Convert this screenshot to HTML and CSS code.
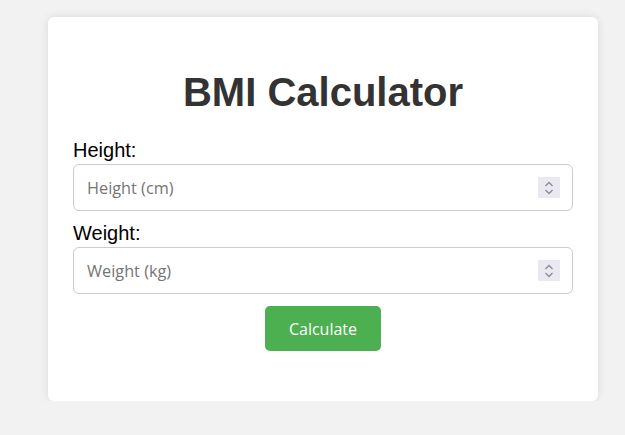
FILE: index.html
```html
<!DOCTYPE html>
<html>
<head>
<meta charset="utf-8">
<title>BMI Calculator</title>
<link rel="stylesheet" href="styles.css">
</head>
<body>
<div class="card">
  <h1 class="title">BMI Calculator</h1>
  <label class="label" for="height">Height:</label>
  <div class="field">
    <input class="input" id="height" type="number" placeholder="Height (cm)">
    <span class="spin"><svg width="12" height="16" viewBox="0 0 12 16"><path d="M2.5 6 L6 2.5 L9.5 6 M2.5 10 L6 13.5 L9.5 10" fill="none" stroke="#8b8b99" stroke-width="1.3"/></svg></span>
  </div>
  <label class="label" for="weight">Weight:</label>
  <div class="field">
    <input class="input" id="weight" type="number" placeholder="Weight (kg)">
    <span class="spin"><svg width="12" height="16" viewBox="0 0 12 16"><path d="M2.5 6 L6 2.5 L9.5 6 M2.5 10 L6 13.5 L9.5 10" fill="none" stroke="#8b8b99" stroke-width="1.3"/></svg></span>
  </div>
  <div class="actions">
    <button class="btn" type="button">Calculate</button>
  </div>
</div>
</body>
</html>
```

FILE: styles.css
```css
html, body {
  margin: 0;
  padding: 0;
}
body {
  background: #f2f2f2;
  font-family: "Liberation Sans", Arial, sans-serif;
  padding: 17px 27px 0 48px;
}
.card {
  width: 550px;
  box-sizing: border-box;
  background: #fff;
  border-radius: 6px;
  box-shadow: 0 0 10px rgba(0, 0, 0, 0.1);
  padding: 52px 25px 50px;
}
.title {
  margin: 0 0 24px;
  font-size: 40px;
  line-height: 46px;
  font-weight: bold;
  color: #333;
  text-align: center;
}
.label {
  display: block;
  font-size: 20px;
  line-height: 23px;
  color: #000;
  margin-bottom: 2px;
}
.field {
  position: relative;
  margin-bottom: 11px;
}
.input {
  display: block;
  width: 100%;
  box-sizing: border-box;
  height: 47px;
  border: 1px solid #ccc;
  border-radius: 6px;
  padding: 0 13px;
  font-family: "Open Sans", "Noto Sans", sans-serif;
  font-size: 16.3px;
  color: #333;
  background: #fff;
  -moz-appearance: textfield;
  outline: none;
}
.input::placeholder {
  color: #757575;
}
.input::-webkit-inner-spin-button,
.input::-webkit-outer-spin-button {
  -webkit-appearance: none;
  margin: 0;
}
.spin {
  position: absolute;
  right: 13px;
  top: 13px;
  width: 22px;
  height: 21px;
  background: #e9e9ef;
  display: flex;
  align-items: center;
  justify-content: center;
}
.spin svg {
  display: block;
}
.actions {
  display: flex;
  justify-content: center;
  padding-top: 1px;
}
.btn {
  height: 45px;
  padding: 0 24px;
  background: #4caf50;
  color: #fff;
  border: none;
  border-radius: 5px;
  font-family: "Open Sans", "Noto Sans", sans-serif;
  font-size: 16px;
  cursor: pointer;
}
```
